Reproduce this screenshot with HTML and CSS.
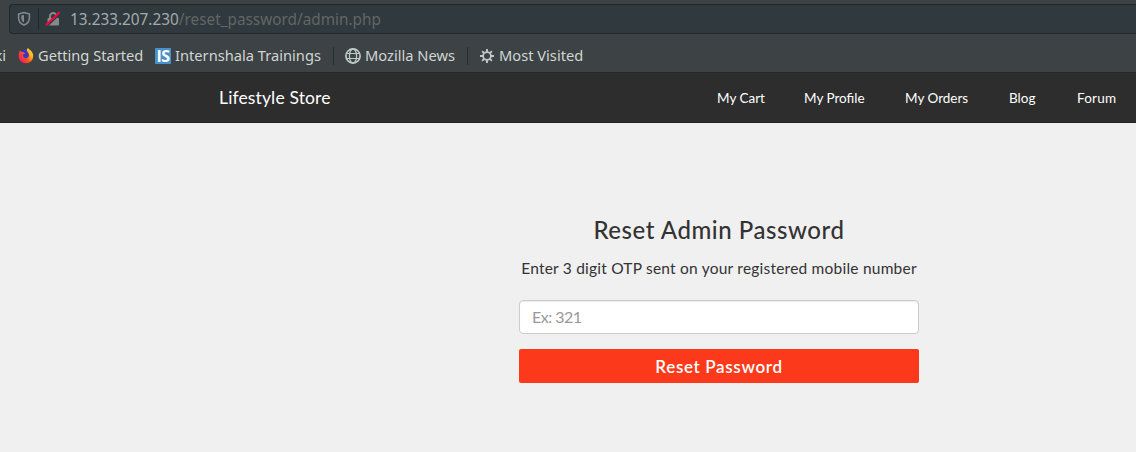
FILE: index.html
```html
<!DOCTYPE html>
<html lang="en">
<head>
<meta charset="utf-8">
<title>Lifestyle Store</title>
<link rel="stylesheet" href="styles.css">
</head>
<body>
<div class="chrome">
  <div class="urlbar">
    <svg class="shield" width="14" height="16" viewBox="0 0 14 16"><path d="M7 1.600 12.400 3V7c0 3.200-1.900 5.600-5.400 7.100C3.500 12.600 1.600 10.200 1.600 7V3Z" fill="none" stroke="#82898b" stroke-width="1.600" stroke-linejoin="round"/><path d="M7 4v7.600C5.200 10.400 4.300 9 4.300 7V4.500Z" fill="#82898b"/></svg>
    <span class="urlbar-divider"></span>
    <svg class="lock" width="16" height="16" viewBox="0 0 16 16"><path d="M5 8V5.200a3.200 3.200 0 0 1 6.400 0V8" fill="none" stroke="#858a8b" stroke-width="2"/><rect x="2.500" y="7" width="11.500" height="7.500" rx="1" fill="#858a8b"/><path d="M1.800 15.400 15.600 2.200" stroke="#303a3e" stroke-width="1.600"/><path d="M1 14.200 14.600 1.200" stroke="#f5053e" stroke-width="2.100"/></svg>
    <span class="url"><span class="host">13.233.207.230</span>/reset_password/admin.php</span>
  </div>
  <div class="bookmarks">
    <span class="bm bm-cut"><span class="label">ki</span></span>
    <span class="bm bm-firefox"><svg width="16" height="16" viewBox="0 0 16 16"><defs><linearGradient id="fox" x1="1" y1="0" x2="0" y2=".8"><stop offset="0" stop-color="#fff044"/><stop offset=".35" stop-color="#ffb31a"/><stop offset=".62" stop-color="#ff4d20"/><stop offset="1" stop-color="#f5156c"/></linearGradient></defs><circle cx="7.600" cy="7.200" r="6" fill="#3b35c4"/><path d="M2 2.200 3.300 4 5.500 4.300 7.200 5.600 4.900 6.600C4.700 8.800 6.300 10.600 8.300 10.300 10.800 9.900 11.500 7.500 10.600 5.600 10 4 8.300 3.200 9 1L10 0c1 1.800 5.200 3.200 5.200 8A7.300 7.300 0 0 1 .6 8C.6 5.500 1.200 4 2 2.200Z" fill="url(#fox)"/></svg><span class="label">Getting Started</span></span>
    <span class="bm bm-is"><span class="is-logo">IS</span><span class="label">Internshala Trainings</span></span>
    <span class="sep"></span>
    <span class="bm bm-news"><svg width="16" height="16" viewBox="0 0 16 16" fill="none" stroke="#bfc8c6"><circle cx="8" cy="8" r="7.100" stroke-width="1.700"/><ellipse cx="8" cy="8" rx="3.600" ry="7" stroke-width="1.300"/><path d="M2 5.500h12M2 10.500h12" stroke-width="1.200"/></svg><span class="label">Mozilla News</span></span>
    <span class="sep"></span>
    <span class="bm bm-most"><svg width="14" height="14" viewBox="0 0 14 14" fill="none" stroke="#bfc8c6"><circle cx="7" cy="7" r="3.900" stroke-width="1.800"/><path d="M7 0v3M7 11v3M0 7h3M11 7h3M2.100 2.100l2 2M9.900 9.900l2 2M2.100 11.900l2-2M9.900 4.100l2-2" stroke-width="1.900"/></svg><span class="label">Most Visited</span></span>
  </div>
</div>
<header class="navbar">
  <a class="brand">Lifestyle Store</a>
  <nav class="links"><a>My Cart</a><a>My Profile</a><a>My Orders</a><a>Blog</a><a class="l-forum">Forum</a></nav>
</header>
<main class="content">
  <form class="reset">
    <h1 class="title">Reset Admin Password</h1>
    <p class="hint">Enter 3 digit OTP sent on your registered mobile number</p>
    <input class="otp" type="text" placeholder="Ex: 321">
    <button class="submit" type="button">Reset Password</button>
  </form>
</main>
</body>
</html>
```

FILE: styles.css
```css
* { box-sizing: border-box; }
body { margin: 0; height: 452px; overflow: hidden; background: #f0f0f0; font-family: Lato, sans-serif; color: #333; }
svg { flex: none; display: block; }
.chrome { height: 73px; padding-top: 4px; background: #3d4244; border-bottom: 1px solid #222b2c; font-family: "Noto Sans", sans-serif; white-space: nowrap; }
.urlbar { display: flex; align-items: center; height: 30px; margin-left: 9px; padding-left: 7px; background: #2f393e; border: 1px solid #20282a; border-right: 0; border-radius: 4px 0 0 4px; }
.urlbar-divider { width: 1px; height: 22px; margin: 0 7px; background: #20292b; }
.lock { margin-left: -1px; }
.url { margin-left: 9px; font-size: 15.330px; line-height: 28px; color: #636665; }
.host { color: #a4aaaa; }
.bookmarks { display: flex; align-items: center; height: 38px; padding-top: 5px; font-size: 14.670px; color: #d0d6d4; }
.bm { display: flex; align-items: center; flex: none; line-height: 20px; }
.label { padding-bottom: 2px; }
.bm-cut { width: 6px; margin-right: 12px; justify-content: flex-end; }
.bm-firefox { width: 137px; gap: 4px; }
.bm-is { width: 178px; gap: 4px; }
.is-logo { flex: none; width: 16px; height: 16px; background: #4a90c8; color: #fff; font: bold 16px/16px "Open Sans", sans-serif; text-align: center; letter-spacing: -.5px; }
.sep { flex: none; width: 1px; height: 18px; background: #292f31; }
.bm-news { margin-left: 11px; width: 122px; gap: 4px; }
.bm-most { margin-left: 12px; gap: 5px; }
.navbar { display: flex; align-items: center; height: 50px; padding-left: 219px; background: #2d2d2d; border-bottom: 1px solid #242424; color: #fff; white-space: nowrap; }
.brand { width: 498px; font-size: 17.500px; letter-spacing: .14px; }
.links { display: grid; grid-template-columns: 87px 101px 104px 68px auto; font-size: 13.500px; }
.l-forum { letter-spacing: .2px; }
.content { padding: 93px 0 0 519px; }
.reset { display: flex; flex-direction: column; width: 400px; white-space: nowrap; }
.title { margin: 0; font-size: 24px; font-weight: 500; line-height: 28px; letter-spacing: .55px; text-align: center; }
.hint { margin: 12px 0 0; font-size: 15.500px; line-height: 24px; letter-spacing: .22px; text-align: center; }
.otp { height: 34px; margin-top: 20px; padding: 0 12px 2px; border: 1px solid #ccc; border-radius: 4px; background: #fff; box-shadow: inset 0 1px 1px rgba(0,0,0,.075); font: 16px Lato, sans-serif; letter-spacing: -.5px; }
.otp::placeholder { color: #999; opacity: 1; }
.submit { height: 34px; margin-top: 15px; padding: 1px 0 0; border: 0; border-radius: 2px; background: #fc3a1b; color: #fff; font: 600 17px Lato, sans-serif; letter-spacing: .65px; }
```
